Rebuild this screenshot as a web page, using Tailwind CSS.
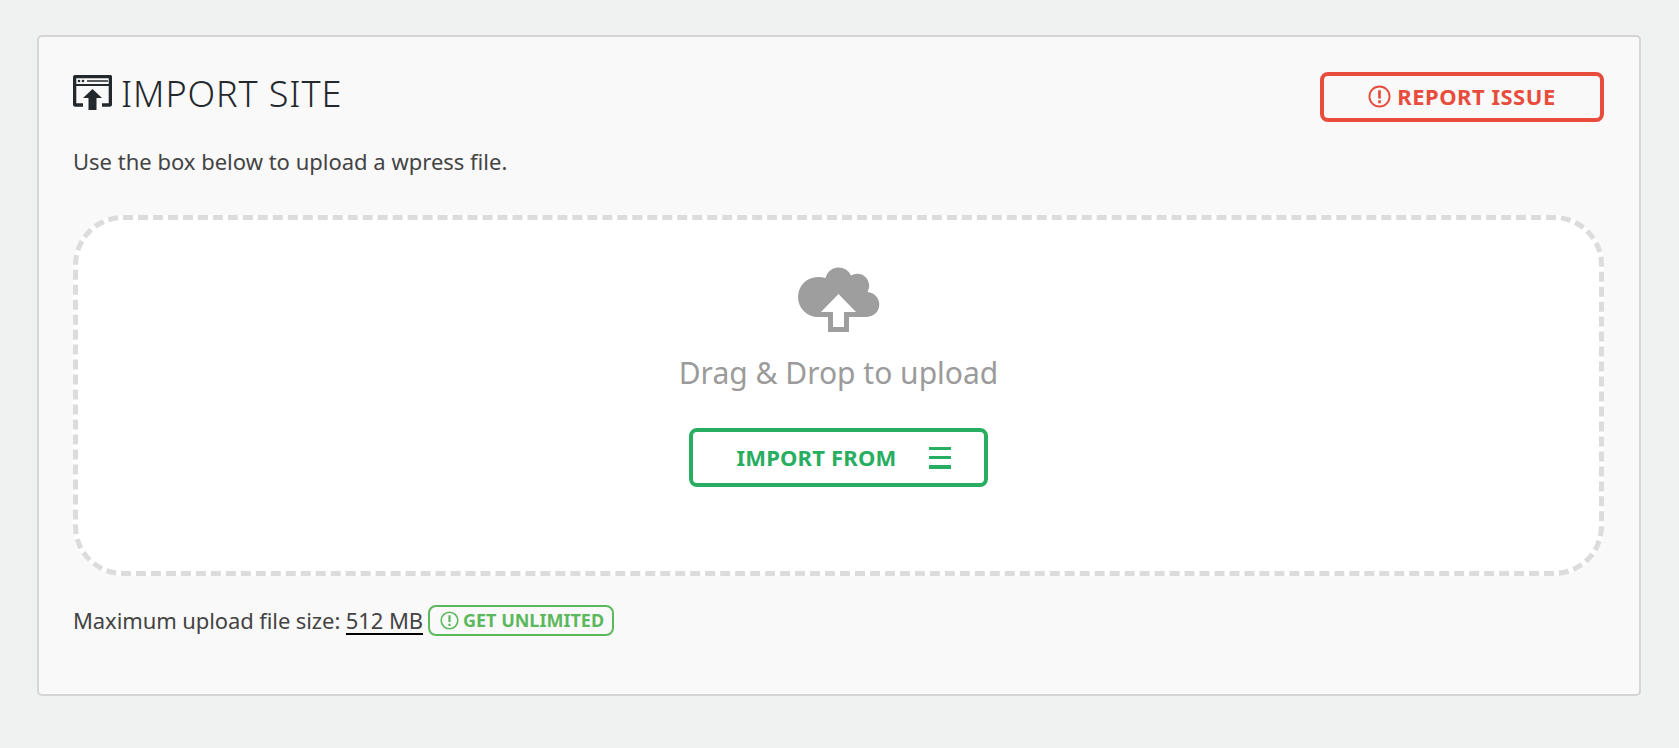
<!DOCTYPE html>
<html lang="en">
<head>
  <meta charset="UTF-8">
  <title>Import Site</title>
  <script src="https://cdn.jsdelivr.net/npm/@tailwindcss/browser@4"></script>
</head>
<body class="bg-[#f0f1f1] h-[748px] overflow-hidden font-['Noto_Sans',sans-serif]">
  <div class="pt-[35px] pl-[37px] w-[1641px]">
    <div class="w-[1604px] h-[661px] bg-[#f9f9f9] border-2 border-[#d5d5d5] rounded-[5px] pl-[34px] pr-[35px] pt-[35px]">
      <!-- Header -->
      <div class="flex justify-between h-[50px]">
        <h1 class="flex items-center h-[44px] text-[#23282d] text-[36px] font-light tracking-[0.9px]">
          <svg class="w-[39px] h-[35px] mr-[9px] mt-[-4px]" viewBox="0 0 39 35">
            <path d="M10 30H3A1.500 1.500 0 0 1 1.500 28.500V3A1.500 1.500 0 0 1 3 1.500h33A1.500 1.500 0 0 1 37.500 3v25.500a1.500 1.500 0 0 1-1.500 1.500H29" fill="none" stroke="#23282d" stroke-width="3.600"/>
            <path d="M2 10h35" stroke="#23282d" stroke-width="2"/>
            <circle cx="6" cy="6" r="1.300" fill="#23282d"/>
            <circle cx="10" cy="6" r="1.300" fill="#23282d"/>
            <path d="M14 6h21" stroke="#23282d" stroke-width="1.500"/>
            <path d="M19.500 14l9.500 9h-5.500v12h-8V23H10z" fill="#23282d"/>
          </svg>
          IMPORT SITE
        </h1>
        <button class="w-[284px] h-[50px] pb-[2px] flex items-center justify-center gap-[6px] border-4 border-[#e74c3c] rounded-[8px] text-[#e74c3c] text-[22px] font-bold tracking-[0.5px]">
          <svg class="w-[23px] h-[23px]" viewBox="0 0 24 24" fill="none" stroke="#e74c3c" stroke-width="2">
            <circle cx="12" cy="12" r="10.500"/>
            <path d="M12 5.500v8.500M12 16v3" stroke-width="2.800"/>
          </svg>
          REPORT ISSUE
        </button>
      </div>
      <p class="mt-[23px] text-[22px] leading-[32px] text-[#444]">Use the box below to upload a wpress file.</p>
      <!-- Drop zone -->
      <div class="mt-[38px] w-[1531px] h-[361px] bg-white border-[5px] border-dashed border-[#dcdcdc] rounded-[50px] flex flex-col items-center">
        <svg class="mt-[46px] w-[82px] h-[68px]" viewBox="0 0 82 68">
          <path d="M20 51A20 20 0 0 1 20 11Q24 11 27.500 12A13.500 13.500 0 0 1 53 9.500A12 12 0 0 1 69.500 26A12.500 12.500 0 0 1 68 51Z" fill="#9e9e9e"/>
          <path d="M30 46h21v20H30z" fill="#9e9e9e"/>
          <path d="M35 46h11v15H35z" fill="#fff"/>
          <path d="M40.500 28l17.500 18H23z" fill="#fff"/>
        </svg>
        <div class="mt-[19px] text-[#9b9b9b] text-[30px] leading-[40px]">Drag &amp; Drop to upload</div>
        <button class="mt-[35px] w-[299px] h-[59px] pl-[10px] flex items-center justify-center gap-[32px] border-4 border-[#27ae60] rounded-[8px] text-[#27ae60] text-[22px] font-bold tracking-[0.2px]">
          IMPORT FROM
          <span class="flex flex-col gap-[6px] w-[22px]">
            <span class="h-[3px] bg-[#27ae60]"></span>
            <span class="h-[3px] bg-[#27ae60]"></span>
            <span class="h-[4px] bg-[#27ae60]"></span>
          </span>
        </button>
      </div>
      <!-- Footer -->
      <div class="mt-[27px] flex items-center h-[34px] text-[22px] text-[#444] tracking-[-0.1px]">
        <span>Maximum upload file size:&nbsp;<span class="inline-block leading-[26px] border-b-2 border-black">512 MB</span></span>
        <a class="ml-[5px] h-[31px] pl-[10px] pr-[8px] flex items-center gap-[4px] border-2 border-[#5cb85c] rounded-[8px] text-[#5cb85c] text-[18px] font-bold tracking-normal">
          <svg class="w-[19px] h-[19px]" viewBox="0 0 24 24" fill="none" stroke="#5cb85c" stroke-width="2">
            <circle cx="12" cy="12" r="10.500"/>
            <path d="M12 5.500v8.500M12 16v3" stroke-width="2.800"/>
          </svg>
          GET UNLIMITED
        </a>
      </div>
    </div>
  </div>
</body>
</html>
